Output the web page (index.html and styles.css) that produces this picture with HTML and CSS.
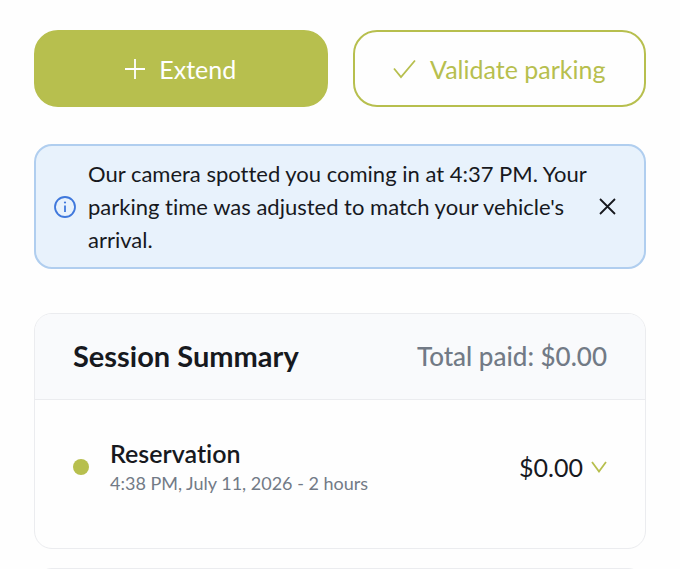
FILE: index.html
```html
<!DOCTYPE html>
<html lang="en">
<head>
  <meta charset="UTF-8" />
  <meta name="viewport" content="width=device-width, initial-scale=1.0"/>
  <title>Parking Session</title>
  <link rel="stylesheet" href="styles.css">
</head>
<body>

  <main class="page">

    <div class="actions">
      <button type="button" class="btn btn-primary">
        <svg width="20" height="20" viewBox="0 0 20 20" aria-hidden="true"><path d="M10 0v20M0 10h20" /></svg>
        Extend
      </button>
      <button type="button" class="btn btn-outline">
        <svg width="23" height="20" viewBox="0 0 23 20" aria-hidden="true"><path d="M1 9.500l7 8.500L22 1.500" /></svg>
        Validate parking
      </button>
    </div>

    <!-- Camera notice -->
    <div class="notice" role="status">
      <svg class="notice-icon" width="22" height="22" viewBox="0 0 22 22" aria-hidden="true">
        <circle cx="11" cy="11" r="10" />
        <path d="M11 9.500v6.500" />
        <circle class="notice-dot" cx="11" cy="6.500" r="1.100" />
      </svg>
      <p>Our camera spotted you coming in at 4:37 PM. Your parking time was adjusted to match your vehicle's arrival.</p>
      <button type="button" class="close" aria-label="Dismiss">
        <svg width="17" height="17" viewBox="0 0 17 17" aria-hidden="true"><path d="M1 1l15 15M16 1L1 16" /></svg>
      </button>
    </div>

    <!-- Session summary -->
    <section class="card">
      <header class="card-header">
        <h2>Session Summary</h2>
        <span class="total">Total paid: $0.00</span>
      </header>
      <div class="entry">
        <span class="dot"></span>
        <div class="entry-text">
          <h3>Reservation</h3>
          <p>4:38 PM, July 11, 2026 - 2 hours</p>
        </div>
        <button type="button" class="amount">
          $0.00
          <svg width="16" height="12" viewBox="0 0 16 12" aria-hidden="true"><path d="M1 1l7 9.500L15 1" /></svg>
        </button>
      </div>
    </section>

    <section class="card details"></section>

  </main>

</body>
</html>
```

FILE: styles.css
```css
:root {
  --green: #b7bf4e;
  --blue: #3f78dc;
  --text: #17191e;
  --muted: #727a86;
  --line: #ebecef;
  --radius: 18px;
}

* {
  box-sizing: border-box;
  margin: 0;
  padding: 0;
}

html {
  scrollbar-width: none;
}

body {
  font-family: Lato, "Open Sans", sans-serif;
  font-variant-ligatures: none;
  background: #fefefe;
  color: var(--text);
}

button {
  font-family: inherit;
  background: none;
  border: none;
  cursor: pointer;
}

svg {
  flex: none;
  fill: none;
  stroke: currentColor;
  stroke-width: 1.8;
}

.page {
  padding: 30px 34px 0;
}

.actions {
  display: grid;
  grid-template-columns: 1fr 1fr;
  gap: 25px;
  margin-bottom: 37px;
}

.btn {
  display: flex;
  align-items: center;
  justify-content: center;
  gap: 14px;
  height: 77px;
  border: 2px solid var(--green);
  border-radius: 24px;
  font-size: 25px;
}

.btn-primary {
  background: var(--green);
  color: #fff;
}

.btn-outline {
  color: var(--green);
}

.notice {
  display: flex;
  align-items: center;
  gap: 12px;
  padding: 11px 28px 11px 18px;
  background: #e8f2fc;
  border: 2px solid #b0ceef;
  border-radius: var(--radius);
  margin-bottom: 44px;
}

.notice p {
  flex: 1;
  font-size: 22px;
  line-height: 33px;
}

.notice-icon {
  color: var(--blue);
}

.notice-dot {
  fill: currentColor;
  stroke: none;
}

.close {
  display: flex;
  color: var(--text);
}

.card {
  border: 1px solid var(--line);
  border-radius: var(--radius);
  background: #fefefe;
  overflow: hidden;
}

.card-header {
  display: flex;
  align-items: center;
  justify-content: space-between;
  padding: 24px 38px 25px;
  background: #f9fafc;
  border-bottom: 1px solid var(--line);
}

.card-header h2 {
  font-size: 29px;
  line-height: 36px;
}

.total {
  font-size: 26px;
  font-weight: 500;
  color: var(--muted);
}

.entry {
  display: flex;
  align-items: center;
  padding: 36px 38px 51px;
}

.dot {
  width: 16px;
  height: 16px;
  margin-right: 21px;
  border-radius: 50%;
  background: var(--green);
}

.entry-text {
  flex: 1;
}

.entry-text h3 {
  font-size: 25px;
  font-weight: 600;
  line-height: 34px;
}

.entry-text p {
  font-size: 18px;
  line-height: 27px;
  color: var(--muted);
}

.amount {
  display: flex;
  align-items: center;
  gap: 8px;
  font-size: 25px;
  color: var(--text);
}

.amount svg {
  color: var(--green);
}

.details {
  margin-top: 19px;
  height: 80px;
}
```
